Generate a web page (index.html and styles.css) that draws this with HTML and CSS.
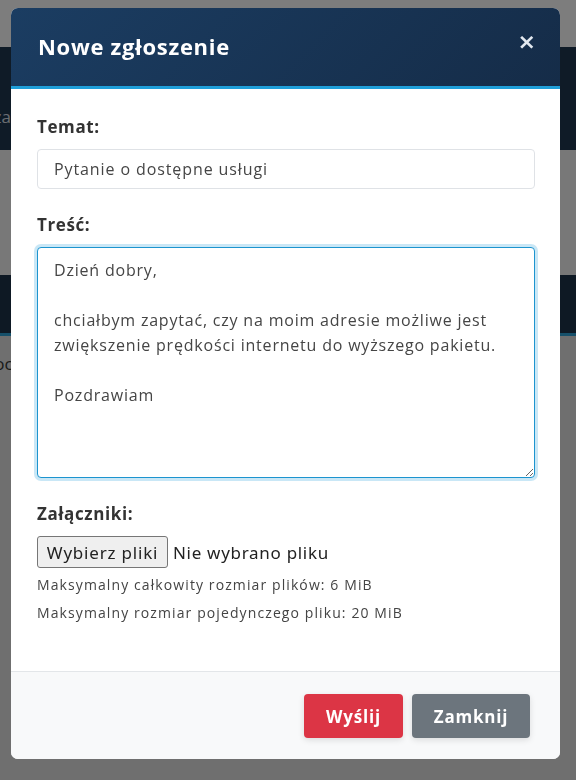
FILE: index.html
```html
<!DOCTYPE html>
<html lang="pl">
<head>
    <meta charset="UTF-8">
    <meta name="viewport" content="width=device-width, initial-scale=1.0">
    <title>Nowe zgłoszenie</title>
    <link rel="stylesheet" href="styles.css">
</head>
<body>
<div class="page">
    <div class="topbar"></div>
    <nav class="navbar">
        <div class="nav-item nav-left">
            <span class="nav-icon"></span>
            <span class="nav-label">Czat</span>
        </div>
        <div class="nav-item nav-right">
            <span class="nav-icon"></span>
            <span class="nav-label">GOK</span>
        </div>
    </nav>
    <section class="hero"></section>
    <div class="band"></div>
    <div class="content">
        <p class="intro">Pomoc<a href="#">l</a></p>
    </div>
</div>

<div class="backdrop"></div>

<div class="modal">
    <div class="modal-header">
        <h2 class="modal-title">Nowe zgłoszenie</h2>
        <button class="close" type="button">&times;</button>
    </div>
    <div class="modal-body">
        <div class="form-group">
            <label class="form-label" for="temat">Temat:</label>
            <input id="temat" class="form-control" type="text" value="Pytanie o dostępne usługi">
        </div>
        <div class="form-group">
            <label class="form-label" for="tresc">Treść:</label>
            <textarea id="tresc" class="form-control form-textarea">Dzień dobry,

chciałbym zapytać, czy na moim adresie możliwe jest zwiększenie prędkości internetu do wyższego pakietu.

Pozdrawiam</textarea>
        </div>
        <div class="form-group">
            <label class="form-label">Załączniki:</label>
            <div class="file-row">
                <button class="file-button" type="button">Wybierz pliki</button>
                <span class="file-name">Nie wybrano pliku</span>
            </div>
            <p class="file-hint">Maksymalny całkowity rozmiar plików: 6 MiB</p>
            <p class="file-hint">Maksymalny rozmiar pojedynczego pliku: 20 MiB</p>
        </div>
    </div>
    <div class="modal-footer">
        <button class="btn btn-danger" type="button">Wyślij</button>
        <button class="btn btn-secondary" type="button">Zamknij</button>
    </div>
</div>
</body>
</html>
```

FILE: styles.css
```css
body {
    margin: 0;
    font-family: 'Open Sans', 'Liberation Sans', sans-serif;
    background-color: #dedede;
    overflow: hidden;
}

/* strona pod oknem */
.page {
    height: 780px;
}

.topbar {
    height: 47px;
    background-color: #fafafa;
}

.navbar {
    height: 103px;
    background-color: #1e364e;
    display: flex;
    justify-content: space-between;
    margin: 0 -44px 0 -26px;
}

.nav-item {
    display: flex;
    flex-direction: column;
    align-items: center;
    padding-top: 31px;
    color: #d4dbe3;
    font-size: 17px;
}

.nav-icon {
    width: 14px;
    height: 15px;
    border: 2px solid #d4dbe3;
    border-radius: 2px;
    box-sizing: border-box;
    margin-bottom: 12px;
}

.nav-left .nav-icon {
    margin-left: 38px;
}

.hero {
    height: 125px;
    background-color: #f0f0f0;
}

.band {
    height: 58px;
    background-color: #1c3248;
    border-bottom: 3px solid #2ca0d4;
}

.content {
    padding-top: 16px;
}

.intro {
    margin: 0 0 0 -42px;
    font-size: 17px;
    color: #333;
}

.intro a {
    color: #c9302c;
    text-decoration: none;
}

.backdrop {
    position: fixed;
    inset: 0;
    background-color: rgba(0, 0, 0, 0.5);
}

/* okno zgłoszenia */
.modal {
    position: fixed;
    top: 8px;
    left: 11px;
    width: 549px;
    background-color: #fff;
    border-radius: 7px;
    overflow: hidden;
}

.modal-header {
    height: 78px;
    display: flex;
    justify-content: space-between;
    align-items: center;
    padding: 0 24px 0 27px;
    background: linear-gradient(135deg, #1b3d62 0%, #152c48 100%);
    border-bottom: 3px solid #1f9fd9;
}

.modal-title {
    margin: 0;
    font-size: 22px;
    font-weight: 700;
    letter-spacing: 0.7px;
    color: #fff;
    padding-bottom: 3px;
}

.close {
    border: none;
    background: none;
    padding: 0;
    color: #e3e9f0;
    font-family: 'DejaVu Sans', sans-serif;
    font-size: 22px;
    font-weight: 700;
    line-height: 1;
    margin-bottom: 10px;
}

.modal-body {
    padding: 25px 25px 48px 26px;
}

.form-group {
    margin-bottom: 23px;
}

.form-group:last-child {
    margin-bottom: 0;
}

.form-label {
    display: block;
    font-size: 17px;
    font-weight: 700;
    line-height: 25px;
    letter-spacing: 0.6px;
    color: #333;
    margin-bottom: 10px;
}

.form-control {
    display: block;
    width: 100%;
    box-sizing: border-box;
    height: 40px;
    padding: 0 16px;
    font-family: 'Open Sans', 'Liberation Sans', sans-serif;
    font-size: 16px;
    letter-spacing: 0.9px;
    color: #454545;
    border: 1px solid #dfe2e6;
    border-radius: 4px;
    background-color: #fff;
}

.form-textarea {
    height: 231px;
    padding: 10px 12px 10px 16px;
    line-height: 25px;
    letter-spacing: 0.8px;
    border-color: #1c94cf;
    box-shadow: 0 0 0 3px rgba(38, 160, 218, 0.25);
    resize: vertical;
    outline: none;
}

.file-row {
    display: flex;
    align-items: center;
    font-family: 'Noto Sans', sans-serif;
    font-size: 17px;
    letter-spacing: 0.7px;
    color: #222;
}

.file-button {
    height: 32px;
    width: 131px;
    padding: 0;
    font-family: inherit;
    font-size: 17px;
    letter-spacing: 0.8px;
    color: #222;
    background-color: #efefef;
    border: 1px solid #767676;
    border-radius: 3px;
    margin-right: 5px;
}

.file-hint {
    margin: 6px 0 0;
    font-size: 14px;
    line-height: 21px;
    letter-spacing: 1.1px;
    color: #444;
}

.file-hint + .file-hint {
    margin-top: 7px;
}

.modal-footer {
    display: flex;
    justify-content: flex-end;
    gap: 9px;
    padding: 22px 30px 21px;
    background-color: #f8f9fa;
    border-top: 1px solid #e3e6e9;
}

.btn {
    height: 44px;
    padding: 0;
    border: none;
    border-radius: 4px;
    font-family: 'Open Sans', 'Liberation Sans', sans-serif;
    font-size: 17px;
    font-weight: 700;
    letter-spacing: 0.8px;
    color: #fff;
    box-shadow: 0 2px 6px rgba(0, 0, 0, 0.12);
}

.btn-danger {
    background-color: #dc3545;
    width: 99px;
}

.btn-secondary {
    background-color: #6c757d;
    width: 118px;
}
```
